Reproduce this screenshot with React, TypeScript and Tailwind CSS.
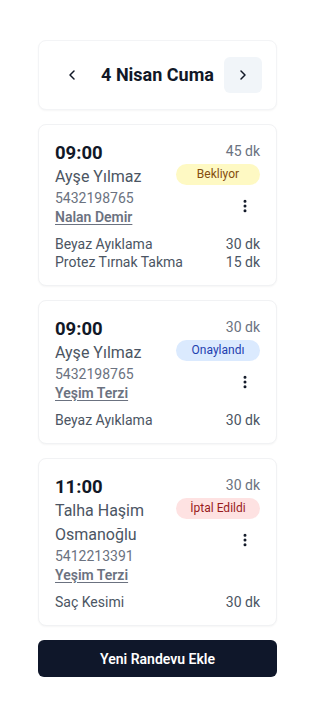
import React from "react";
import { ChevronLeft, ChevronRight, EllipsisVertical } from "lucide-react";

type Status = "Bekliyor" | "Onaylandı" | "İptal Edildi";

interface Appt {
  time: string;
  duration: string;
  name: string;
  phone: string;
  staff: string;
  status: Status;
  services: { name: string; dur: string }[];
}

const appts: Appt[] = [
  {
    time: "09:00",
    duration: "45 dk",
    name: "Ayşe Yılmaz",
    phone: "5432198765",
    staff: "Nalan Demir",
    status: "Bekliyor",
    services: [
      { name: "Beyaz Ayıklama", dur: "30 dk" },
      { name: "Protez Tırnak Takma", dur: "15 dk" },
    ],
  },
  {
    time: "09:00",
    duration: "30 dk",
    name: "Ayşe Yılmaz",
    phone: "5432198765",
    staff: "Yeşim Terzi",
    status: "Onaylandı",
    services: [{ name: "Beyaz Ayıklama", dur: "30 dk" }],
  },
  {
    time: "11:00",
    duration: "30 dk",
    name: "Talha Haşim Osmanoğlu",
    phone: "5412213391",
    staff: "Yeşim Terzi",
    status: "İptal Edildi",
    services: [{ name: "Saç Kesimi", dur: "30 dk" }],
  },
];

function Badge({ status }: { status: Status }) {
  if (status === "Bekliyor")
    return (
      <span className="block w-full rounded-full bg-[#fef9c3] text-center text-xs leading-[21px] text-[#854d0e]">
        {status}
      </span>
    );
  if (status === "Onaylandı")
    return (
      <span className="block w-full rounded-full bg-[#dbeafe] text-center text-xs leading-[21px] text-[#1e40af]">
        {status}
      </span>
    );
  return (
    <span className="block w-full rounded-full bg-[#fee2e2] text-center text-xs leading-[21px] text-[#991b1b]">
      {status}
    </span>
  );
}

function Card({ a }: { a: Appt }) {
  return (
    <div className="rounded-lg border border-[#f1f2f4] bg-white px-4 pt-4 pb-[14px] shadow-[0_1px_2px_rgba(0,0,0,0.04)]">
      <div className="flex items-start justify-between gap-2">
        <div className="min-w-0 flex-1">
          <div className="text-[18.5px] font-bold leading-6 text-[#111827]">{a.time}</div>
          <div className="text-base leading-6 text-[#4b5563]">{a.name}</div>
          <div className="text-sm leading-[19px] text-[#6b7280]">{a.phone}</div>
          <div className="text-sm font-semibold leading-[19px] text-[#6b7280] underline underline-offset-2">
            {a.staff}
          </div>
        </div>
        <div className="flex w-[84px] shrink-0 flex-col items-end">
          <div className="text-sm leading-5 text-[#6b7280]">{a.duration}</div>
          <div className="mt-[3px] w-full">
            <Badge status={a.status} />
          </div>
          <button className="mt-[5px] flex h-8 w-[30px] items-center justify-center rounded-md text-[#111827]">
            <EllipsisVertical size={16} strokeWidth={2.5} />
          </button>
        </div>
      </div>
      <div className="mt-2">
        {a.services.map((s, i) => (
          <div key={i} className="flex justify-between text-sm leading-[18px] text-[#4b5563]">
            <span>{s.name}</span>
            <span>{s.dur}</span>
          </div>
        ))}
      </div>
    </div>
  );
}

export default function App() {
  return (
    <div className="min-h-[725px] bg-white pt-10 font-['Roboto',sans-serif]">
      <div className="ml-[38px] flex w-[239px] flex-col gap-[14px]">
        <div className="flex items-center justify-center gap-2.5 rounded-lg border border-[#f3f4f6] bg-white px-3 py-4 shadow-[0_1px_2px_rgba(0,0,0,0.04)]">
          <button className="flex h-9 w-[38px] shrink-0 items-center justify-center rounded-md text-[#111827]">
            <ChevronLeft size={16} strokeWidth={2.25} />
          </button>
          <div className="whitespace-nowrap text-lg font-bold text-[#111827]">4 Nisan Cuma</div>
          <button className="flex h-9 w-[38px] shrink-0 items-center justify-center rounded-md bg-[#f1f5f9] text-[#111827]">
            <ChevronRight size={16} strokeWidth={2.25} />
          </button>
        </div>
        {appts.map((a, i) => (
          <Card key={i} a={a} />
        ))}
        <button className="h-[37px] w-full rounded-md bg-[#0f172a] text-sm font-semibold text-white">
          Yeni Randevu Ekle
        </button>
      </div>
    </div>
  );
}
